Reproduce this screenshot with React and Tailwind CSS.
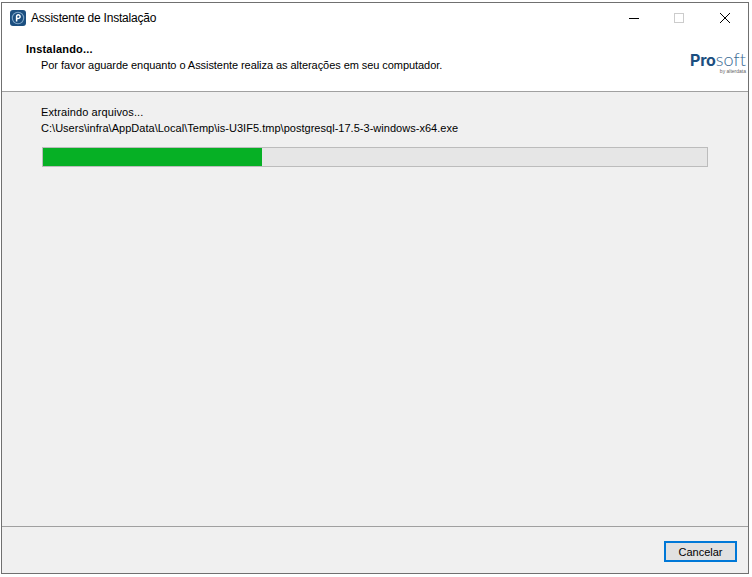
import React from "react";

function AppIcon() {
  return (
    <svg width="16" height="16" viewBox="0 0 16 16" className="shrink-0">
      <rect x="0" y="0" width="16" height="16" rx="3" fill="#1c4f80" />
      <circle cx="8" cy="8" r="5.7" fill="none" stroke="#7fa6c8" strokeWidth="1.1" />
      <path d="M6.6 11.6V6.2C6.8 5 8 4.6 9 5C10.3 5.5 10.5 7.2 9.5 8C8.9 8.5 8 8.6 7.2 8.5" fill="none" stroke="#ffffff" strokeWidth="1.5" />
    </svg>
  );
}

function TitleBar() {
  return (
    <div className="flex h-[29px] items-center bg-white pl-[8px]">
      <AppIcon />
      <span className="ml-[5px] text-[12px] tracking-[-0.2px] text-black">Assistente de Instalação</span>
      <div className="ml-auto flex items-center pr-[18px]">
        <svg width="10" height="10" viewBox="0 0 10 10" className="mr-[35px]">
          <path d="M0 5.5H10" stroke="#000" strokeWidth="1" />
        </svg>
        <svg width="10" height="10" viewBox="0 0 10 10" className="mr-[36px]">
          <rect x="0.5" y="0.5" width="9" height="9" fill="none" stroke="#cccccc" />
        </svg>
        <svg width="10" height="10" viewBox="0 0 10 10">
          <path d="M0 0L10 10M10 0L0 10" stroke="#000" strokeWidth="1" />
        </svg>
      </div>
    </div>
  );
}

function Logo() {
  return (
    <div className="flex flex-col items-end">
      <div className="flex items-baseline text-[#1c4f80]">
        <span className="text-[16px] leading-[13px] font-bold tracking-[-0.2px] [font-family:'Inter',sans-serif]">Pro</span>
        <span className="text-[18px] leading-[13px] font-light tracking-[0.1px] text-[#3b6a94] [font-family:'Lato',sans-serif]">soft</span>
      </div>
      <span className="mt-[2px] text-[5px] leading-[5px] text-[#666666]">by alterdata</span>
    </div>
  );
}

function Header() {
  return (
    <div className="flex h-[60px] justify-between border-b border-[#a0a0a0] bg-white pl-[24px] pr-[2px]">
      <div className="pt-[9px]">
        <div className="text-[11px] leading-[16px] font-bold tracking-[0.2px] text-black">Instalando...</div>
        <div className="pl-[15px] text-[11px] leading-[16px] tracking-[-0.06px] text-black">
          Por favor aguarde enquanto o Assistente realiza as alterações em seu computador.
        </div>
      </div>
      <div className="pt-[21px]">
        <Logo />
      </div>
    </div>
  );
}

function Progress({ percent }) {
  return (
    <div className="mt-[11px] ml-[1px] h-[20px] w-[666px] border border-[#bcbcbc] bg-[#e6e6e6]">
      <div className="h-full bg-[#06b025]" style={{ width: `${percent}%` }} />
    </div>
  );
}

export default function App() {
  return (
    <div className="h-[577px] w-[752px] overflow-hidden bg-white pl-[1px] pt-[2px] [font-family:'Liberation_Sans',sans-serif]">
      <div className="flex h-[572px] w-[748px] flex-col border border-[#707070] bg-[#f0f0f0]">
        <TitleBar />
        <Header />
        <div className="flex-1 pl-[39px] pt-[12px]">
          <div className="text-[11px] leading-[16px] tracking-[0.1px] text-black">Extraindo arquivos...</div>
          <div className="text-[11px] leading-[16px] tracking-[0.025px] text-black">
            C:\Users\infra\AppData\Local\Temp\is-U3IF5.tmp\postgresql-17.5-3-windows-x64.exe
          </div>
          <Progress percent={33} />
        </div>
        <div className="flex h-[47px] items-start justify-end border-t border-[#a0a0a0] pr-[11px] pt-[14px]">
          <button className="h-[21px] w-[73px] border-2 border-[#0078d7] bg-[#e1e1e1] text-[11px] leading-[16px] text-black">
            Cancelar
          </button>
        </div>
      </div>
    </div>
  );
}
